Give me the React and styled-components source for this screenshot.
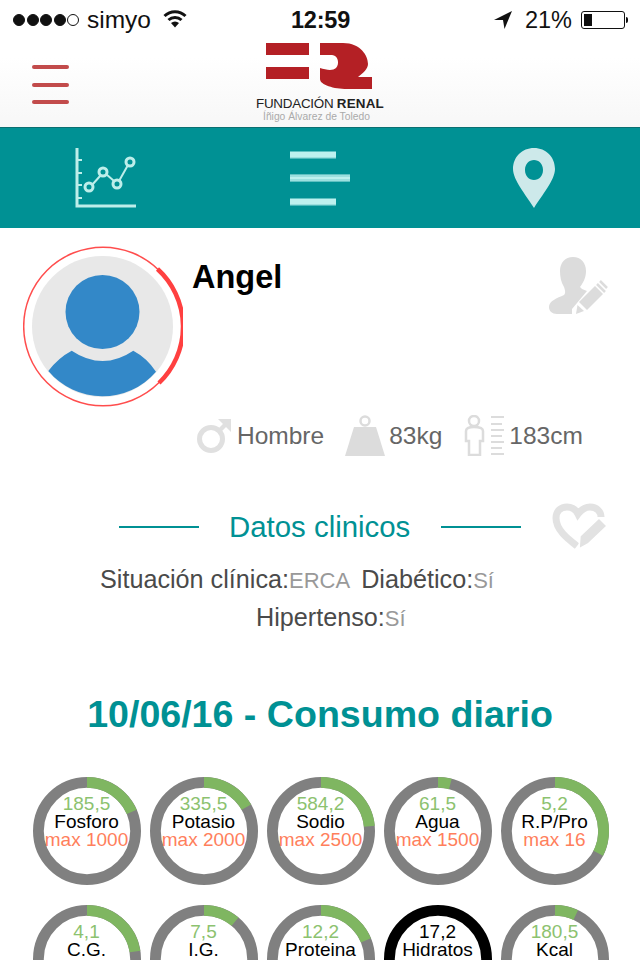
import React from "react";
import styled, { createGlobalStyle } from "styled-components";

const teal = "#009194";

const GlobalStyle = createGlobalStyle`
    html, body {
        margin: 0;
        padding: 0;
        background: #fff;
    }
    body {
        font-family: "Liberation Sans", Arial, sans-serif;
    }
`;

const Page = styled.div`
    width: 640px;
    height: 960px;
    overflow: hidden;
    background: #fff;
`;

const StatusBar = styled.div`
    height: 40px;
    display: grid;
    grid-template-columns: 1fr auto 1fr;
    align-items: center;
    padding: 0 12px 0 13px;
    font-size: 23.5px;
    color: #111;
`;

const StatusGroup = styled.div`
    display: flex;
    align-items: center;
    justify-content: ${p => p.$end ? "flex-end" : "flex-start"};
`;

const Signal = styled.div`
    display: flex;
    gap: 1.5px;
    margin-right: 8px;
`;

const Dot = styled.span`
    width: 12px;
    height: 12px;
    box-sizing: border-box;
    border-radius: 50%;
    border: 1px solid #111;
    background: ${p => p.$off ? "transparent" : "#111"};
`;

const Carrier = styled.span`
    margin-right: 12px;
    font-size: 24.5px;
`;

const Time = styled.span`
    font-weight: 700;
    letter-spacing: -0.2px;
`;

const Percent = styled.span`
    margin: 0 9px 0 13px;
`;

const Battery = styled.div`
    position: relative;
    width: 44px;
    height: 18px;
    box-sizing: border-box;
    border: 1px solid #111;
    border-radius: 3px;
    padding: 2px;
    margin-right: 3px;

    &::after {
        content: "";
        position: absolute;
        right: -4px;
        top: 5px;
        width: 2px;
        height: 6px;
        background: #111;
        border-radius: 0 2px 2px 0;
    }
`;

const BatteryLevel = styled.div`
    width: 21%;
    height: 100%;
    background: #111;
`;

const Header = styled.header`
    height: 88px;
    box-sizing: border-box;
    padding: 3px 32px 0;
    display: grid;
    grid-template-columns: 1fr auto 1fr;
    align-items: start;
    background: linear-gradient(#fff 20%, #f7f7f7);
    border-bottom: 1px solid #0b6f71;
`;

const Burger = styled.div`
    width: 37px;
    margin-top: 22px;
    display: flex;
    flex-direction: column;
    gap: 13.5px;
`;

const BurgerBar = styled.span`
    height: 4px;
    border-radius: 2px;
    background: #c24b4b;
`;

const Logo = styled.div`
    display: flex;
    flex-direction: column;
    align-items: center;
`;

const LogoName = styled.div`
    margin-top: 6px;
    font-size: 13.4px;
    line-height: 15px;
    letter-spacing: -0.25px;
    color: #222;
    white-space: nowrap;

    b {
        letter-spacing: 0.2px;
    }
`;

const LogoSub = styled.div`
    align-self: flex-start;
    margin-left: 7px;
    font-size: 10.3px;
    line-height: 11px;
    color: #aaa;
    white-space: nowrap;
`;

const NavBar = styled.nav`
    height: 100px;
    display: grid;
    grid-template-columns: 212px 216px 212px;
    background: ${teal};
`;

const NavItem = styled.div`
    display: flex;
    justify-content: center;
    align-items: flex-start;
    padding-top: 20px;
`;

const Profile = styled.section`
    display: grid;
    grid-template-columns: 160px 1fr;
    column-gap: 9px;
    padding: 18px 32px 0 23px;
`;

const ProfileBody = styled.div`
    display: flex;
    flex-direction: column;
`;

const NameRow = styled.div`
    display: flex;
    justify-content: space-between;
    align-items: flex-start;
    height: 169px;
`;

const Name = styled.h1`
    margin: 12px 0 0;
    font-size: 32.5px;
    line-height: 38px;
    font-weight: 700;
    color: #000;
`;

const EditIcon = styled.svg`
    margin-top: ${p => p.$top || 0}px;
`;

const Stats = styled.div`
    display: flex;
    align-items: center;
    margin-left: 5px;
    font-size: 24.5px;
    color: #666;
`;

const Stat = styled.div`
    display: flex;
    align-items: center;
    gap: ${p => p.$gap}px;
    margin-right: ${p => p.$after}px;
`;

const Clinical = styled.section`
    margin-top: 47px;
`;

const ClinicalHead = styled.div`
    display: grid;
    grid-template-columns: 80px auto 80px 1fr;
    align-items: center;
    padding: 0 32px 0 119px;
`;

const Rule = styled.span`
    display: block;
    height: 2px;
    background: ${teal};
`;

const HeartEdit = styled.svg`
    justify-self: end;
`;

const ClinicalTitle = styled.h2`
    margin: 0 31px 0 30px;
    font-size: 29.4px;
    line-height: 48px;
    font-weight: 400;
    color: ${teal};
`;

const Facts = styled.div`
    margin-top: 9px;
    font-size: 25.2px;
    color: #4a4a4a;
`;

const FactRow = styled.div`
    height: 38px;
    display: flex;
    align-items: center;
    gap: ${p => p.$gap || 0}px;
    padding-left: ${p => p.$left}px;
`;

const FactValue = styled.span`
    color: #999;
    font-size: 22px;
`;

const DailyTitle = styled.h2`
    margin: 56px 0 0;
    font-size: 37.6px;
    line-height: 44px;
    font-weight: 700;
    text-align: center;
    color: ${teal};
`;

const GaugeGrid = styled.div`
    margin-top: 41px;
    padding-left: 32.5px;
    display: grid;
    grid-template-columns: repeat(5, 108px);
    column-gap: 9px;
    row-gap: 20px;
`;

const Gauge = styled.div`
    position: relative;
    width: 108px;
    height: 108px;
    box-sizing: border-box;
    padding-top: 17px;
    display: flex;
    flex-direction: column;
    align-items: center;
    font-size: 19px;
    line-height: 18px;
    white-space: nowrap;
`;

const GaugeRing = styled.svg`
    position: absolute;
    left: 0;
    top: 0;
`;

const GaugeValue = styled.span`
    position: relative;
    line-height: 19px;
    color: ${p => p.$plain ? "#000" : "#8cc26f"};
`;

const GaugeName = styled.span`
    position: relative;
    color: #000;
`;

const GaugeMax = styled.span`
    position: relative;
    color: #ff7f5c;
`;

const gauges = [
    { value: "185,5", name: "Fosforo", max: "max 1000", part: 0.1855 },
    { value: "335,5", name: "Potasio", max: "max 2000", part: 0.168 },
    { value: "584,2", name: "Sodio", max: "max 2500", part: 0.234 },
    { value: "61,5", name: "Agua", max: "max 1500", part: 0.041 },
    { value: "5,2", name: "R.P/Pro", max: "max 16", part: 0.325 },
    { value: "4,1", name: "C.G.", max: "", part: 0.225 },
    { value: "7,5", name: "I.G.", max: "", part: 0.11 },
    { value: "12,2", name: "Proteina", max: "", part: 0.187 },
    { value: "17,2", name: "Hidratos", max: "", part: 0, over: true },
    { value: "180,5", name: "Kcal", max: "", part: 0.07 }
];

function Ring({ part, over }) {
    const radius = 48.6;
    const length = 2 * Math.PI * radius;
    return (
        <GaugeRing width="108" height="108" viewBox="0 0 108 108">
            <circle cx="54" cy="54" r={radius} fill="none" stroke={over ? "#000" : "#808080"} strokeWidth="10.8" />
            {part > 0 && (
                <circle
                    cx="54"
                    cy="54"
                    r={radius}
                    fill="none"
                    stroke="#7fb661"
                    strokeWidth="10.8"
                    strokeDasharray={`${length * part} ${length}`}
                    transform="rotate(-90 54 54)"
                />
            )}
        </GaugeRing>
    );
}

function Avatar() {
    return (
        <svg width="160" height="162" viewBox="0 0 160 162">
            <circle cx="79.5" cy="80.5" r="70.5" fill="#e8e8e8" />
            <circle cx="79.5" cy="66" r="37" fill="#3388c8" />
            <path
                d="M25.3 125 Q35 112 48.7 104.7 Q64 115 79.7 115 Q95 115 110.3 104.7 Q124 112 133 125.7 A70.5 70.5 0 0 1 25.3 125 Z"
                fill="#3388c8"
            />
            <circle cx="80" cy="80.5" r="79.3" fill="none" stroke="#ff4d4d" strokeWidth="1.5" />
            <path d="M134.5 23 A78 78 0 0 1 136 137" fill="none" stroke="#ff4040" strokeWidth="4.5" />
        </svg>
    );
}

function Wifi() {
    return (
        <svg width="24" height="19" viewBox="0 0 24 19" style={{ marginTop: -4 }}>
            <path d="M1.5 7 A15 15 0 0 1 22.5 7" fill="none" stroke="#111" strokeWidth="3" />
            <path d="M5.5 11 A9.5 9.5 0 0 1 18.5 11" fill="none" stroke="#111" strokeWidth="3" />
            <path d="M8 14 L12 18.5 L16 14 A6 6 0 0 0 8 14 Z" fill="#111" />
        </svg>
    );
}

function LogoMark() {
    return (
        <svg width="107" height="47" viewBox="0 0 107 47">
            <rect x="0" y="0" width="43" height="12" fill="#b42025" />
            <rect x="0" y="24" width="43" height="12" fill="#b42025" />
            <path
                d="M54 0 H77 C95 0 102 13 102 21 C102 26 97 30 92 34 H106 V46 H81 C68 46 54 42 54 36 V25 C60 27 67 28 70 25 C74 21 72 12 66 12 H54 Z"
                fill="#b42025"
            />
        </svg>
    );
}

export default function App() {
    return (
        <Page>
            <GlobalStyle />
            <StatusBar>
                <StatusGroup>
                    <Signal>
                        <Dot />
                        <Dot />
                        <Dot />
                        <Dot />
                        <Dot $off />
                    </Signal>
                    <Carrier>simyo</Carrier>
                    <Wifi />
                </StatusGroup>
                <Time>12:59</Time>
                <StatusGroup $end>
                    <svg width="18" height="18" viewBox="0 0 18 18">
                        <path d="M0 9 L18 0 L10.5 18 L9 9 Z" fill="#111" />
                    </svg>
                    <Percent>21%</Percent>
                    <Battery>
                        <BatteryLevel />
                    </Battery>
                </StatusGroup>
            </StatusBar>
            <Header>
                <Burger>
                    <BurgerBar />
                    <BurgerBar />
                    <BurgerBar />
                </Burger>
                <Logo>
                    <LogoMark />
                    <LogoName>FUNDACIÓN <b>RENAL</b></LogoName>
                    <LogoSub>Íñigo Álvarez de Toledo</LogoSub>
                </Logo>
            </Header>
            <NavBar>
                <NavItem>
                    <svg width="62" height="60" viewBox="0 0 62 60" fill="none" stroke="#bdeeea">
                        <path d="M2 0 V58 H61" strokeWidth="3" />
                        <path d="M2 12 H7 M2 25 H7 M2 37 H7 M2 50 H7" strokeWidth="2" />
                        <path d="M17 37 L26 27 M31 26 L39 33 M44 33 L53 17" strokeWidth="2" />
                        <circle cx="14" cy="39" r="4" strokeWidth="3" />
                        <circle cx="28" cy="24" r="4" strokeWidth="3" />
                        <circle cx="42" cy="36" r="4" strokeWidth="3" />
                        <circle cx="55" cy="14" r="4" strokeWidth="3" />
                    </svg>
                </NavItem>
                <NavItem>
                    <svg width="60" height="60" viewBox="0 0 60 60">
                        <path d="M0 7 H46 M0 30 H60 M0 54 H46" stroke="#bdf1ef" strokeWidth="7" />
                        <path d="M0 10 H46 M0 28 H60 M0 32 H60 M0 57 H46" stroke={teal} strokeOpacity="0.35" strokeWidth="1" />
                    </svg>
                </NavItem>
                <NavItem>
                    <svg width="42" height="60" viewBox="0 0 42 60">
                        <path
                            fillRule="evenodd"
                            d="M21 0 C33 0 42 9 42 21 C42 32 29 47 21 60 C13 47 0 32 0 21 C0 9 9 0 21 0 Z M21 12 C16 12 12 16 12 22 C12 28 16 32 21 32 C26 32 30 28 30 22 C30 16 26 12 21 12 Z"
                            fill="#cde9ea"
                        />
                    </svg>
                </NavItem>
            </NavBar>
            <Profile>
                <Avatar />
                <ProfileBody>
                    <NameRow>
                        <Name>Angel</Name>
                        <EditIcon $top={11} width="59" height="58" viewBox="0 0 59 58">
                            <path
                                d="M24 0 C32 0 37 6 37 14 C37 21 34 26 31 30 L33 32 L38 34 L23 52 V57 H8 C3 57 0 54 0 50 C0 44 8 41 15 38 C17 36 16 33 15 30 C12 25 11 20 11 14 C11 6 16 0 24 0 Z"
                                fill="#dcdcdc"
                            />
                            <path d="M30 45 L46 29 L54 37 L38 53 Z" fill="#dcdcdc" />
                            <path d="M28.5 48 L35 54 L27 57 Z" fill="#dcdcdc" />
                            <path d="M48 27 L56 35 M51 24 L58 31" stroke="#dcdcdc" strokeWidth="2.5" />
                        </EditIcon>
                    </NameRow>
                    <Stats>
                        <Stat $gap={5} $after={21}>
                            <svg width="35" height="35" viewBox="0 0 35 35" fill="none" stroke="#e0e0e0">
                                <circle cx="14" cy="21" r="11.5" strokeWidth="5" />
                                <path d="M22 13 L30 5" strokeWidth="4.5" />
                                <path d="M21 1 H34 V14 Z" fill="#e0e0e0" stroke="none" />
                            </svg>
                            <span>Hombre</span>
                        </Stat>
                        <Stat $gap={4} $after={22}>
                            <svg width="40" height="41" viewBox="0 0 40 41">
                                <circle cx="20" cy="6" r="4.5" fill="none" stroke="#dcdcdc" strokeWidth="2.5" />
                                <path d="M9 12 H31 L40 41 H0 Z" fill="#dcdcdc" />
                            </svg>
                            <span>83kg</span>
                        </Stat>
                        <Stat $gap={4} $after={0}>
                            <svg width="41" height="41" viewBox="0 0 41 41" fill="none" stroke="#dcdcdc">
                                <circle cx="10" cy="6" r="5" strokeWidth="2.5" />
                                <path d="M2 26 V16 C2 13 5 12 10 12 C15 12 19 13 19 16 V26 H16 V40 H5 V26 Z" strokeWidth="2.5" />
                                <path d="M27 2 H40 M27 9 H38 M27 15 H40 M27 21 H38 M27 27 H40 M27 33 H38 M27 39 H40" strokeWidth="2" />
                            </svg>
                            <span>183cm</span>
                        </Stat>
                    </Stats>
                </ProfileBody>
            </Profile>
            <Clinical>
                <ClinicalHead>
                    <Rule />
                    <ClinicalTitle>Datos clinicos</ClinicalTitle>
                    <Rule />
                    <HeartEdit width="56" height="48" viewBox="0 0 56 48">
                        <path
                            fill="none"
                            stroke="#e2e2e2"
                            strokeWidth="7"
                            d="M25 43 C16 36 4 27 4 15 C4 8 9 4 15 4 C20 4 24 7 26 11 C29 7 33 4 38 4 C45 4 49 9 49 14"
                        />
                        <path d="M28 33 L47 15 L55 23 L36 41 L27 46 Z" fill="#e2e2e2" stroke="#fff" strokeWidth="1.5" />
                    </HeartEdit>
                </ClinicalHead>
                <Facts>
                    <FactRow $left={100} $gap={11}>
                        <span>Situación clínica:<FactValue>ERCA</FactValue></span>
                        <span>Diabético:<FactValue>Sí</FactValue></span>
                    </FactRow>
                    <FactRow $left={256}>
                        <span>Hipertenso:<FactValue>Sí</FactValue></span>
                    </FactRow>
                </Facts>
            </Clinical>
            <DailyTitle>10/06/16 - Consumo diario</DailyTitle>
            <GaugeGrid>
                {gauges.map(g => (
                    <Gauge key={g.name}>
                        <Ring part={g.part} over={g.over} />
                        <GaugeValue $plain={g.over}>{g.value}</GaugeValue>
                        <GaugeName>{g.name}</GaugeName>
                        {g.max && <GaugeMax>{g.max}</GaugeMax>}
                    </Gauge>
                ))}
            </GaugeGrid>
        </Page>
    );
}
